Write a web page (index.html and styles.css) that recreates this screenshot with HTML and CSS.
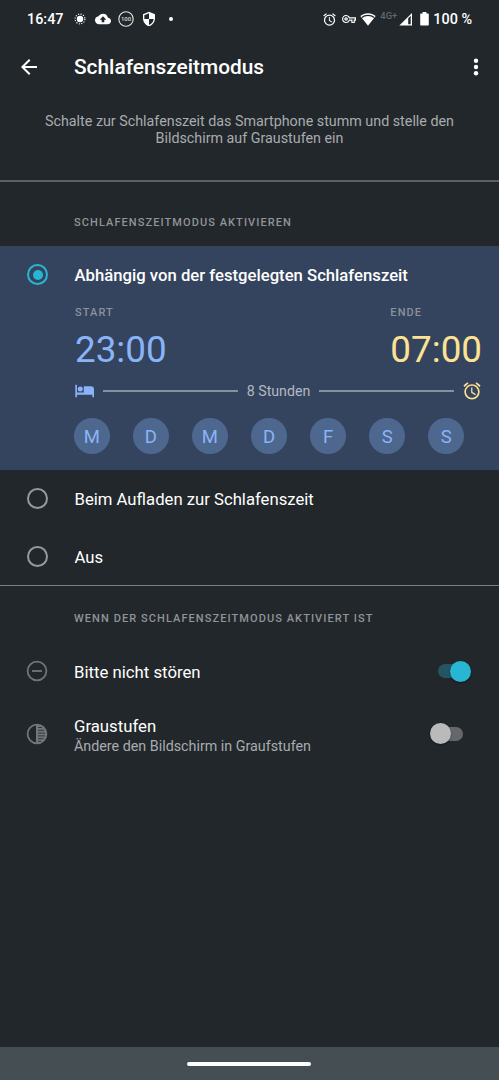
FILE: index.html
```
<!DOCTYPE html>
<html lang="de">
<head>
  <meta charset="UTF-8">
  <meta name="viewport" content="width=device-width, initial-scale=1.0">
  <title>Schlafenszeitmodus</title>
  <link rel="stylesheet" href="styles.css">
</head>
<body>
  <div class="screen">
    <div class="status-bar">
      <span class="clock">16:47</span>
      <div class="status-left">
        <svg width="12" height="12" viewBox="0 0 12 12"><circle cx="6" cy="6" r="3.2" fill="#fff"/><circle cx="6" cy="6" r="4.9" fill="none" stroke="#fff" stroke-width="1.2" stroke-dasharray="1.1 1.46"/></svg>
        <svg width="16" height="16" viewBox="0 0 24 24"><path fill="#fff" d="M19.35 10.04A7.49 7.49 0 0 0 12 4C9.11 4 6.6 5.64 5.35 8.04A5.994 5.994 0 0 0 0 14c0 3.31 2.69 6 6 6h13c2.76 0 5-2.24 5-5 0-2.64-2.05-4.78-4.65-4.96zM14 13v4h-4v-4H7l5-5 5 5h-3z"/></svg>
        <svg width="16" height="16" viewBox="0 0 16 16"><circle cx="8" cy="8" r="7.2" fill="none" stroke="#e8e8e8" stroke-width="1.1"/><text class="badge-text" x="8" y="10.2" text-anchor="middle">100</text></svg>
        <svg width="16" height="16" viewBox="0 0 24 24"><path fill="#fff" fill-rule="evenodd" d="M12 1 3 5v6c0 5.55 3.84 10.74 9 12 5.16-1.26 9-6.45 9-12V5l-9-4zM12 3.2V12h7c-.53 4.12-3.28 7.79-7 8.94V12H5V6.3l7-3.1z"/></svg>
        <span class="dot"></span>
      </div>
      <div class="status-right">
        <svg class="st-alarm" width="15" height="15" viewBox="0 0 24 24"><path fill="#fff" d="m22 5.72-4.6-3.86-1.29 1.53 4.6 3.86L22 5.72zM7.88 3.39 6.6 1.86 2 5.71l1.29 1.53 4.59-3.85zM12.5 8H11v6l4.75 2.85.75-1.23-4-2.37V8zM12 4a9 9 0 1 0 0 18 9 9 0 0 0 0-18zm0 16c-3.87 0-7-3.13-7-7s3.13-7 7-7 7 3.13 7 7-3.13 7-7 7z"/></svg>
        <svg class="st-key" width="14" height="14" viewBox="0 0 24 24"><path fill="#fff" d="M22 19h-6v-4h-2.68A6.98 6.98 0 0 1 7 19c-3.86 0-7-3.14-7-7s3.14-7 7-7c2.72 0 5.17 1.58 6.32 4H24v6h-2v4zm-4-2h2v-4h2v-2H11.94l-.23-.67A5.01 5.01 0 0 0 7 7c-2.76 0-5 2.24-5 5s2.24 5 5 5c2.11 0 3.99-1.34 4.71-3.33l.23-.67H18v4zM7 15c-1.65 0-3-1.35-3-3s1.35-3 3-3 3 1.35 3 3-1.35 3-3 3zm0-4a1 1 0 1 0 0 2 1 1 0 0 0 0-2z"/></svg>
        <svg class="st-wifi" width="16" height="13" viewBox="0 0 16 13"><path fill="#fff" d="M8 .2C4.9 .2 2.3 1.3 .3 3.100L8 12.800l7.700-9.700C13.700 1.300 11.100 .2 8 .2z"/><path fill="none" stroke="#22272b" stroke-width="1.300" d="M1.800 4.500C5.300 1.600 10.700 1.600 14.200 4.500"/></svg>
        <span class="network">4G+</span>
        <svg class="st-signal" width="13" height="13" viewBox="0 0 13 13"><path fill="#fff" fill-rule="evenodd" d="M13 0v12.500H.3L13 0zM9.200 5.300v6h2.500V2.800z"/></svg>
        <svg class="st-battery" width="9" height="14" viewBox="0 0 9 14"><path fill="#fff" d="M2.600 0h3.800v1.500H8a.8.800 0 0 1 .8.800v10.400a.8.800 0 0 1-.8.800H1a.8.800 0 0 1-.8-.8V2.300A.8.800 0 0 1 1 1.500h1.600z"/></svg>
        <span class="battery">100 %</span>
      </div>
    </div>

    <header>
      <svg width="24" height="24" viewBox="0 0 24 24"><path fill="#fff" d="M20 11H7.830l5.590-5.590L12 4l-8 8 8 8 1.410-1.410L7.830 13H20v-2z"/></svg>
      <h1>Schlafenszeitmodus</h1>
      <svg class="menu" width="6" height="18" viewBox="0 0 6 18"><g fill="#fff"><circle cx="3" cy="2.700" r="2.200"/><circle cx="3" cy="9" r="2.200"/><circle cx="3" cy="15.300" r="2.200"/></g></svg>
    </header>

    <p class="description">Schalte zur Schlafenszeit das Smartphone stumm und stelle den<br>Bildschirm auf Graustufen ein</p>

    <h2>Schlafenszeitmodus aktivieren</h2>

    <div class="schedule">
      <div class="option">
        <span class="radio checked"></span>
        <span class="option-title">Abhängig von der festgelegten Schlafenszeit</span>
      </div>
      <div class="times">
        <div class="time start">
          <span class="time-label">Start</span>
          <span class="time-value">23:00</span>
        </div>
        <div class="time end">
          <span class="time-label">Ende</span>
          <span class="time-value">07:00</span>
        </div>
      </div>
      <div class="duration">
        <svg width="19" height="14" viewBox="0 0 19.500 14"><path fill="#8ab4f8" d="M.3.500h1.700v8.100h7V2.200h7.200a3.300 3.300 0 0 1 3.300 3.300v7.900h-1.700v-2.600H2v2.600H.3z"/><circle cx="5.400" cy="5" r="2.600" fill="#8ab4f8"/></svg>
        <span class="line"></span>
        <span class="hours">8 Stunden</span>
        <span class="line"></span>
        <svg width="18" height="18" viewBox="1.500 1.500 21 21"><path fill="#fde293" d="m22 5.720-4.600-3.860-1.290 1.530 4.600 3.860L22 5.720zM7.880 3.390 6.600 1.860 2 5.710l1.290 1.530 4.590-3.850zM12.500 8H11v6l4.750 2.850.75-1.230-4-2.370V8zM12 4a9 9 0 1 0 0 18 9 9 0 0 0 0-18zm0 16c-3.870 0-7-3.130-7-7s3.130-7 7-7 7 3.130 7 7-3.130 7-7 7z"/></svg>
      </div>
      <div class="days">
        <span>M</span>
        <span>D</span>
        <span>M</span>
        <span>D</span>
        <span>F</span>
        <span>S</span>
        <span>S</span>
      </div>
    </div>

    <div class="choices">
      <div class="option">
        <span class="radio"></span>
        <span class="option-title">Beim Aufladen zur Schlafenszeit</span>
      </div>
      <div class="option">
        <span class="radio"></span>
        <span class="option-title">Aus</span>
      </div>
    </div>

    <h2 class="second">Wenn der Schlafenszeitmodus aktiviert ist</h2>

    <div class="setting dnd">
      <svg width="22" height="22" viewBox="0 0 22 22"><g fill="none" stroke="#737678" stroke-width="1.800"><circle cx="11" cy="11" r="9.400"/><path d="M6 11h10"/></g></svg>
      <div class="setting-text">
        <span class="setting-title">Bitte nicht stören</span>
      </div>
      <span class="switch on"></span>
    </div>
    <div class="setting gray">
      <svg width="22" height="22" viewBox="0 0 22 22"><circle cx="11" cy="11" r="9.400" fill="none" stroke="#737678" stroke-width="1.800"/><path fill="#737678" d="M10 1.500h1a9.500 9.500 0 0 1 0 19h-1z"/><path stroke="#22272b" stroke-width=".8" d="M12 4.500h4M12 7.300h6M12 10.100h7M12 12.900h7M12 15.700h5.500M12 18.300h3"/></svg>
      <div class="setting-text">
        <span class="setting-title">Graustufen</span>
        <span class="setting-sub">Ändere den Bildschirm in Graufstufen</span>
      </div>
      <span class="switch"></span>
    </div>

    <div class="nav-bar"><span class="handle"></span></div>
  </div>
</body>
</html>
```
FILE: styles.css
```
:root {
  --bg: #22272b;
  --panel: #34445e;
  --blue: #8ab4f8;
  --yellow: #fde293;
  --cyan: #29b6d5;
}

* {
  box-sizing: border-box;
}

body {
  margin: 0;
  background-color: var(--bg);
  color: #fff;
  font-family: Roboto, sans-serif;
}

svg {
  display: block;
  flex-shrink: 0;
}

.screen {
  display: flex;
  flex-direction: column;
  height: 1080px;
}

.status-bar {
  display: flex;
  align-items: center;
  height: 38px;
  padding: 0 27px;
  font-size: 14.4px;
  font-weight: 500;
}

.clock {
  width: 47px;
}

.status-left {
  display: flex;
  align-items: center;
  gap: 7px;
}

.status-left svg:first-child {
  margin-right: 2px;
}

.badge-text {
  font-size: 6px;
  font-weight: 500;
  fill: #ddd;
}

.dot {
  width: 4px;
  height: 4px;
  margin-left: 5px;
  border-radius: 50%;
  background-color: #fff;
}

.status-right {
  display: flex;
  align-items: center;
  margin-left: auto;
}

.st-key {
  margin-left: 5px;
}

.st-wifi {
  margin-left: 4px;
}

.network {
  margin: 0 2px 6px 4px;
  font-size: 9.4px;
  line-height: 1;
  color: #63686b;
}

.st-battery {
  margin: 0 4px 0 8px;
}

header {
  display: flex;
  align-items: center;
  height: 57px;
  padding: 0 20px 0 17px;
}

h1 {
  margin: 0 0 0 33px;
  font-size: 20.85px;
  font-weight: 500;
}

.menu {
  margin-left: auto;
}

.description {
  height: 87px;
  margin: 0;
  padding-top: 18px;
  border-bottom: 2px solid #5c6063;
  font-size: 14.3px;
  line-height: 17px;
  text-align: center;
  color: #a9acae;
}

h2 {
  height: 64px;
  margin: 0;
  padding: 34px 0 0 74px;
  font-size: 11px;
  line-height: 13px;
  font-weight: 500;
  letter-spacing: 1.08px;
  text-transform: uppercase;
  color: #919497;
}

.schedule {
  height: 224px;
  background-color: var(--panel);
}

.option {
  display: flex;
  align-items: center;
  height: 58px;
  padding-left: 27px;
}

.option-title {
  margin-left: 26.5px;
  font-size: 16.7px;
}

.schedule .option-title {
  font-weight: 500;
}

.radio {
  width: 21px;
  height: 21px;
  margin-bottom: 2px;
  border: 2px solid #969a9d;
  border-radius: 50%;
}

.radio.checked {
  padding: 3.5px;
  border-color: var(--cyan);
  background: var(--cyan) content-box;
}

.times {
  display: flex;
  justify-content: space-between;
  padding: 1px 17px 0 75px;
}

.time {
  display: flex;
  flex-direction: column;
}

.time-label {
  font-size: 11px;
  line-height: 15px;
  font-weight: 500;
  letter-spacing: 1.08px;
  text-transform: uppercase;
  color: #8b919b;
}

.time-value {
  margin-top: 8px;
  font-size: 36.8px;
  line-height: 44px;
}

.start .time-value {
  color: var(--blue);
}

.end .time-value {
  color: var(--yellow);
}

.duration {
  display: flex;
  align-items: center;
  height: 20px;
  margin-top: 9px;
  padding: 0 18px 0 75px;
}

.line {
  flex: 1;
  height: 1.5px;
  margin: 0 9px;
  background-color: #8590a1;
}

.hours {
  font-size: 14.2px;
  color: #b3b8c1;
}

.days {
  display: flex;
  justify-content: space-between;
  margin-top: 17px;
  padding: 0 35px 0 74px;
}

.days span {
  width: 35.5px;
  height: 35.5px;
  border-radius: 50%;
  background-color: #4e678e;
  color: var(--blue);
  font-size: 18.5px;
  line-height: 38px;
  text-align: center;
}

.choices {
  height: 116px;
  border-bottom: 1px solid #797d80;
}

h2.second {
  height: 54px;
  padding-top: 26px;
}

.setting {
  display: flex;
  align-items: center;
  height: 62px;
  padding: 0 28px 0 26px;
}

.setting-text {
  display: flex;
  flex-direction: column;
  margin-left: 26px;
}

.dnd .setting-text {
  padding-top: 2px;
}

.gray .setting-text {
  padding-top: 6px;
}

.setting-title {
  font-size: 16.75px;
  line-height: 20px;
}

.setting-sub {
  font-size: 14.3px;
  line-height: 21px;
  color: #a9acae;
}

.gray svg {
  margin-top: 2px;
}

.switch {
  display: flex;
  align-items: center;
  width: 29px;
  height: 14px;
  margin: 0 8px 0 auto;
  border-radius: 7px;
  background-color: #64686b;
}

.gray .switch {
  margin-top: 1px;
}

.switch::before {
  content: "";
  flex-shrink: 0;
  width: 21px;
  height: 21px;
  margin-left: -4px;
  border-radius: 50%;
  background-color: #bababa;
  box-shadow: 0 1px 2px rgba(0, 0, 0, 0.4);
}

.switch.on {
  margin-right: 4px;
  background-color: #245562;
}

.switch.on::before {
  margin-left: 12px;
  background-color: var(--cyan);
}

.nav-bar {
  display: flex;
  justify-content: center;
  height: 33px;
  margin-top: auto;
  padding: 15px 1px 0 0;
  background-color: #454e53;
}

.handle {
  width: 124px;
  height: 4px;
  border-radius: 2px;
  background-color: #fff;
}
```
